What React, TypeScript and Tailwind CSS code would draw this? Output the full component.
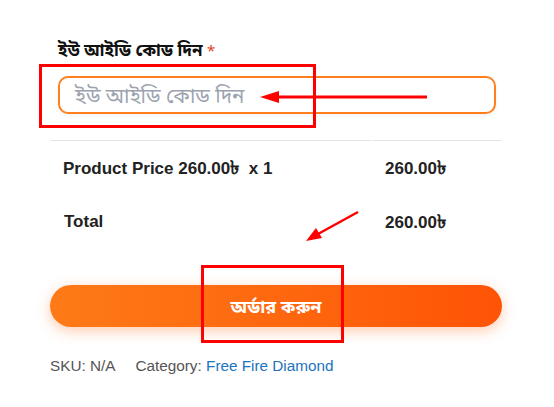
import React from "react";

export default function App() {
  const bn = '"Noto Sans", "Noto Sans Bengali", "Liberation Sans", sans-serif';
  return (
    <div className="relative w-[554px] h-[407px] bg-white overflow-hidden" style={{ fontFamily: '"Liberation Sans", Arial, sans-serif' }}>
      <div className="pl-[50px] pr-[52px] pt-[39px]">
        <div className="pl-[8px] pr-[6px]">
          <label className="block text-[17px] font-bold text-[#111] leading-[22px]" style={{ fontFamily: bn }}>
            ইউ আইডি কোড দিন <span className="text-[#e2401c] font-normal text-[15px]">*</span>
          </label>
          <div className="mt-[15px] h-[38px] rounded-[10px] border-2 border-[#ff7f1e] flex items-center pl-[15px] shadow-[0_2px_4px_rgba(0,0,0,0.05)]">
            <span className="text-[20.5px] leading-[24px] text-[#9ca3af]" style={{ fontFamily: bn }}>ইউ আইডি কোড দিন</span>
          </div>
        </div>
        <div className="mt-[26px] flex">
          <div className="w-[321px] border-t border-[#e5e5e5]" />
          <div className="ml-[1px] flex-1 border-t border-[#e5e5e5]" />
        </div>
        <div className="flex text-[17px] font-bold text-[#222] mt-[17px] h-[20px] leading-[20px]">
          <div className="w-[335px] pl-[13px]">Product Price 260.00<span className="text-[19px] leading-none">৳</span>&nbsp;&nbsp;x 1</div>
          <div>260.00<span className="text-[19px] leading-none">৳</span></div>
        </div>
        <div className="flex text-[17px] font-bold text-[#222] mt-[34px] h-[20px] leading-[20px]">
          <div className="w-[335px] pl-[14px]">Total</div>
          <div>260.00<span className="text-[19px] leading-none">৳</span></div>
        </div>
        <button className="mt-[53px] w-full h-[42px] rounded-full bg-gradient-to-r from-[#fe7a17] to-[#fe5305] text-white text-[18px] font-bold shadow-[0_4px_14px_rgba(255,110,30,0.35)] flex items-center justify-center" style={{ fontFamily: bn }}>
          অর্ডার করুন
        </button>
        <div className="mt-[29px] text-[15.3px] text-[#555] flex leading-[20px]">
          <span>SKU: N/A</span>
          <span className="ml-[20px]">Category: <span className="text-[#1e73be]">Free Fire Diamond</span></span>
        </div>
      </div>

      {/* annotations */}
      <div className="absolute left-[39px] top-[64px] w-[277px] h-[64px] border-[3px] border-[#ff0000]" />
      <div className="absolute left-[201px] top-[265px] w-[143px] h-[78px] border-[3px] border-[#ff0000]" />
      <svg className="absolute left-0 top-0" width="554" height="407">
        <line x1="427" y1="97" x2="275" y2="97" stroke="#ff0000" strokeWidth="3" />
        <polygon points="260,97 279,91 279,103" fill="#ff0000" />
        <line x1="358" y1="212" x2="318" y2="234" stroke="#ff0000" strokeWidth="2.5" />
        <polygon points="306,241 316,228 322,238" fill="#ff0000" />
      </svg>
    </div>
  );
}
